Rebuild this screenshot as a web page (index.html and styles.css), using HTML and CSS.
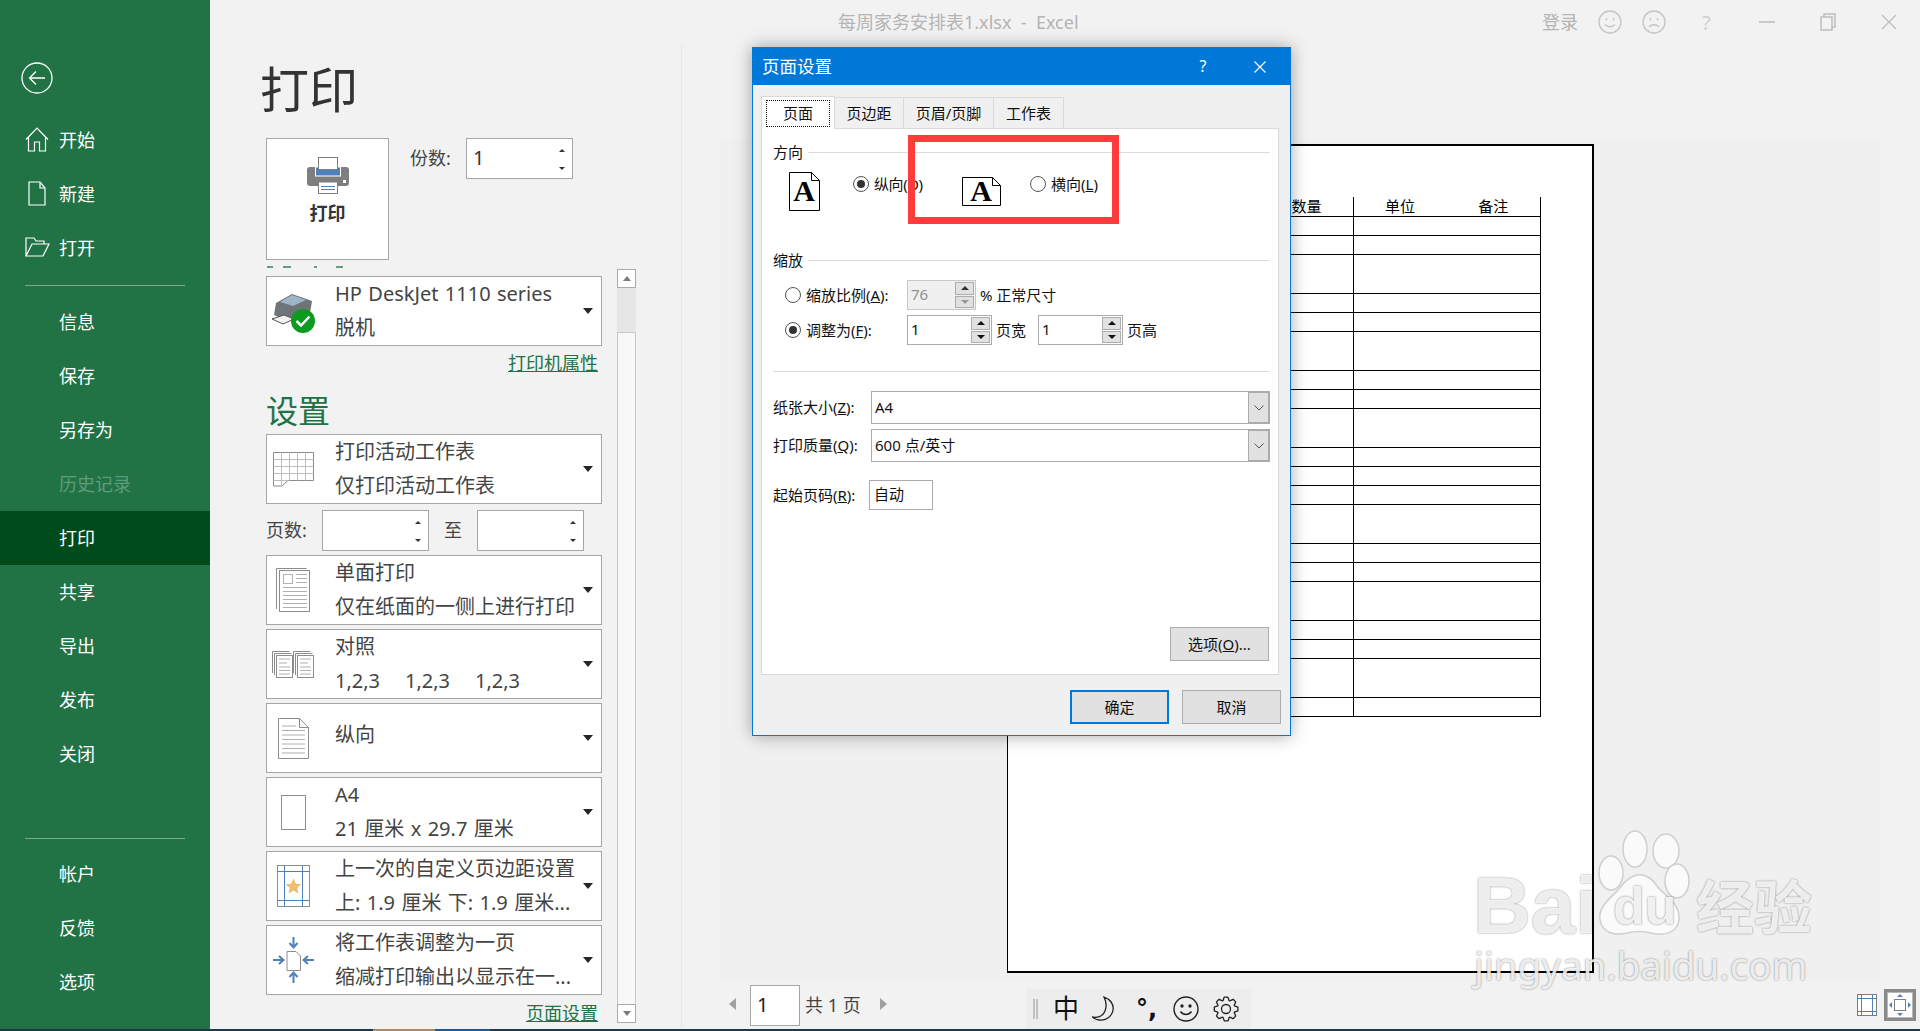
FILE: index.html
```html
<!DOCTYPE html>
<html lang="zh-CN">
<head>
    <meta charset="UTF-8">
    <title>每周家务安排表1.xlsx - Excel</title>
    <link rel="stylesheet" href="styles.css">
</head>
<body>
<div class="app">
    <!-- Green backstage menu -->
    <nav class="sidebar">
        <svg class="back" width="32" height="32" viewBox="0 0 32 32" fill="none" stroke="#fff" stroke-width="1.3"><circle cx="16" cy="16" r="15"/><path d="M24 16H8.5M15 9.5L8.5 16l6.5 6.5"/></svg>
        <a class="nav-item"><span class="nav-icon"><svg width="24" height="25" viewBox="0 0 24 25" fill="none" stroke="#fff" stroke-width="1.2"><path d="M1 12.5L12 1l11 11.5M3.5 10.5V24h6v-9h5v9h6V10.5"/></svg></span>开始</a>
        <a class="nav-item"><span class="nav-icon"><svg width="24" height="25" viewBox="0 0 24 25" fill="none" stroke="#fff" stroke-width="1.2"><path d="M4 1h11l5 6v17H4zM15 1v6h5"/></svg></span>新建</a>
        <a class="nav-item"><span class="nav-icon"><svg width="25" height="20" viewBox="0 0 25 20" fill="none" stroke="#fff" stroke-width="1.2"><path d="M1 19V1h8l2 3h8v3M1 19h17l6-12H7z"/></svg></span>打开</a>
        <div class="nav-line first-line"></div>
        <a class="nav-item"><span class="nav-icon"></span>信息</a>
        <a class="nav-item"><span class="nav-icon"></span>保存</a>
        <a class="nav-item"><span class="nav-icon"></span>另存为</a>
        <a class="nav-item disabled"><span class="nav-icon"></span>历史记录</a>
        <a class="nav-item active"><span class="nav-icon"></span>打印</a>
        <a class="nav-item"><span class="nav-icon"></span>共享</a>
        <a class="nav-item"><span class="nav-icon"></span>导出</a>
        <a class="nav-item"><span class="nav-icon"></span>发布</a>
        <a class="nav-item"><span class="nav-icon"></span>关闭</a>
        <div class="nav-line second-line"></div>
        <a class="nav-item"><span class="nav-icon"></span>帐户</a>
        <a class="nav-item"><span class="nav-icon"></span>反馈</a>
        <a class="nav-item"><span class="nav-icon"></span>选项</a>
    </nav>

    <main class="main">
        <header class="titlebar">
            <div class="doc-title">每周家务安排表1.xlsx&nbsp; -&nbsp; Excel</div>
            <div class="window-tools">
                <span class="login">登录</span>
                <svg class="tool smile" width="24" height="24" viewBox="0 0 24 24" fill="none" stroke="#c4c4c4" stroke-width="1.3"><circle cx="12" cy="12" r="11"/><path d="M7 14.5c2.5 3 7.5 3 10 0M8.5 8v2.5M15.5 8v2.5"/></svg>
                <svg class="tool frown" width="24" height="24" viewBox="0 0 24 24" fill="none" stroke="#c4c4c4" stroke-width="1.3"><circle cx="12" cy="12" r="11"/><path d="M7 17c2.5-3 7.5-3 10 0M8.5 8v2.5M15.5 8v2.5"/></svg>
                <span class="tool help">?</span>
                <svg class="tool minimize" width="16" height="2" viewBox="0 0 16 2"><path d="M0 1h16" stroke="#bdbdbd" stroke-width="1.5"/></svg>
                <svg class="tool restore" width="16" height="18" viewBox="0 0 16 18" fill="none" stroke="#bdbdbd" stroke-width="1.5"><path d="M1 4h11v13H1zM4 4V1h11v13h-3"/></svg>
                <svg class="tool close" width="16" height="16" viewBox="0 0 16 16" fill="none" stroke="#bdbdbd" stroke-width="1.3"><path d="M1 1l14 14M15 1L1 15"/></svg>
            </div>
        </header>

        <div class="content">
            <!-- Left: print settings -->
            <section class="print-panel">
                <div class="settings-col">
                    <h1 class="page-title">打印</h1>
                    <div class="print-row">
                        <button class="print-btn">
                            <svg width="42" height="37" viewBox="0 0 42 37"><rect y="10" width="42" height="19" rx="3" fill="#7f7f7f"/><rect x="8.5" y="10" width="25" height="9" fill="#4f81bd" stroke="#fff"/><rect x="11.5" y="0.5" width="19" height="12" fill="#fff" stroke="#7f7f7f"/><rect x="11.5" y="25" width="19" height="11.5" fill="#fff" stroke="#7f7f7f"/><path d="M14 29.5h14M14 32.5h14" stroke="#4f81bd"/><rect x="36" y="23" width="3" height="3" fill="#fff"/></svg>
                            <span class="print-label">打印</span>
                        </button>
                        <span class="field-label copies-label">份数:</span>
                        <div class="spin copies"><span class="spin-value">1</span><span class="carets"><i class="caret-up"></i><i class="caret-down"></i></span></div>
                    </div>
                    <!-- Top edge of the next heading, cut off by the scroll area -->
                    <div class="sliver"><i class="s1"></i><i class="s2"></i><i class="s3"></i><i class="s4"></i></div>
                    <div class="drop">
                        <span class="drop-icon"><svg width="44" height="44" viewBox="0 0 44 44"><path d="M5 14l16-9 20 7-2 12-22 8-14-6z" fill="#6f7478"/><path d="M9 13l12-7 14 5-13 6z" fill="#9fb4c4"/><path d="M1 30l12-4 10 4-11 5z" fill="#f2f2f2" stroke="#555"/><circle cx="32" cy="32" r="12" fill="#0d9a1f"/><path d="M25.5 32l4.5 4.5 8.5-9" fill="none" stroke="#fff" stroke-width="2.5"/></svg></span>
                        <div class="drop-text"><div>HP DeskJet 1110 series</div><div>脱机</div></div>
                        <i class="drop-arrow"></i>
                    </div>
                    <a class="link printer-link">打印机属性</a>
                    <h2 class="section-title">设置</h2>
                    <div class="drop">
                        <span class="drop-icon"><svg width="41" height="35" viewBox="0 0 41 35" fill="#fff" stroke="#8c8c8c"><path d="M.5.5h40v28H15l-6 5.5H.5z"/><path d="M.5 7.5h40M.5 14.5h40M.5 21.5h40M.5 28.5h15M8.5.5v33M16.5.5v28M24.5.5v28M32.5.5v28" fill="none" stroke="#bdbdbd"/></svg></span>
                        <div class="drop-text"><div>打印活动工作表</div><div>仅打印活动工作表</div></div>
                        <i class="drop-arrow"></i>
                    </div>
                    <div class="pages-row">
                        <span class="field-label pages-label">页数:</span>
                        <div class="spin pages"><span class="spin-value"></span><span class="carets"><i class="caret-up"></i><i class="caret-down"></i></span></div>
                        <span class="field-label to-label">至</span>
                        <div class="spin pages"><span class="spin-value"></span><span class="carets"><i class="caret-up"></i><i class="caret-down"></i></span></div>
                    </div>
                    <div class="drop">
                        <span class="drop-icon"><svg width="34" height="44" viewBox="0 0 34 44" fill="none" stroke="#8c8c8c"><path d="M.5 41V.5h30"/><rect x="3.5" y="2.5" width="30" height="41" fill="#fff"/><rect x="7.5" y="6.5" width="9" height="9" stroke="#b0b0b0"/><path d="M20 6.5h11M20 10.5h11M20 14.5h11M7 19.5h24M7 23.5h24M7 27.5h24M7 31.5h24M7 35.5h24M7 39.5h24" stroke="#b0b0b0"/></svg></span>
                        <div class="drop-text"><div>单面打印</div><div>仅在纸面的一侧上进行打印</div></div>
                        <i class="drop-arrow"></i>
                    </div>
                    <div class="drop">
                        <span class="drop-icon"><svg width="42" height="27" viewBox="0 0 42 27" fill="none" stroke="#8c8c8c"><path d="M.5 22V.5h17M2.5 24V2.5h17"/><rect x="4.5" y="4.5" width="16" height="22" fill="#fff"/><path d="M7 8h11M7 12h8M7 16h11M7 19.5h11M7 23h11" stroke="#b0b0b0"/><path d="M21.5 22V.5h17M23.5 24V2.5h17"/><rect x="25.5" y="4.5" width="16" height="22" fill="#fff"/><path d="M28 8h11M28 12h8M28 16h11M28 19.5h11M28 23h11" stroke="#b0b0b0"/></svg></span>
                        <div class="drop-text"><div>对照</div><div><span class="collate-item">1,2,3</span><span class="collate-item">1,2,3</span><span class="collate-item">1,2,3</span></div></div>
                        <i class="drop-arrow"></i>
                    </div>
                    <div class="drop">
                        <span class="drop-icon"><svg width="31" height="41" viewBox="0 0 31 41" fill="#fff" stroke="#8c8c8c"><path d="M.5.5h21l9 9v31H.5zM21.5.5v9h9"/><path d="M4 8h14M4 12.5h23M4 17h23M4 21.5h23M4 26h23M4 30.5h23M4 35h23" stroke="#b0b0b0"/></svg></span>
                        <div class="drop-text single"><div>纵向</div></div>
                        <i class="drop-arrow"></i>
                    </div>
                    <div class="drop">
                        <span class="drop-icon"><svg width="25" height="35" viewBox="0 0 25 35"><rect x=".5" y=".5" width="24" height="34" fill="#fff" stroke="#8c8c8c"/></svg></span>
                        <div class="drop-text"><div>A4</div><div>21 厘米 x 29.7 厘米</div></div>
                        <i class="drop-arrow"></i>
                    </div>
                    <div class="drop">
                        <span class="drop-icon"><svg width="33" height="42" viewBox="0 0 33 42" fill="none"><rect x=".5" y=".5" width="32" height="41" fill="#fff" stroke="#8c8c8c"/><path d="M7.5.5v41M25.5.5v41M.5 6.5h32M.5 35.5h32" stroke="#4f81bd"/><path d="M16.5 13.5l2.3 5.2 5.7.5-4.3 3.8 1.3 5.5-5-3-5 3 1.3-5.5-4.3-3.8 5.7-.5z" fill="#ecbd73"/></svg></span>
                        <div class="drop-text"><div>上一次的自定义页边距设置</div><div>上: 1.9 厘米 下: 1.9 厘米...</div></div>
                        <i class="drop-arrow"></i>
                    </div>
                    <div class="drop">
                        <span class="drop-icon"><svg width="41" height="46" viewBox="0 0 41 46" fill="none"><path d="M14 14.5h9l4.5 4.5v14.5H14z" fill="#fff" stroke="#8c8c8c"/><path d="M20.5 0v10M16.5 6l4 4.5 4-4.5M20.5 46V36M16.5 40l4-4.5 4 4.5M0 23h10M6 19l4.5 4-4.5 4M41 23H31M35 19l-4.5 4 4.5 4" stroke="#4f81bd" stroke-width="2"/></svg></span>
                        <div class="drop-text"><div>将工作表调整为一页</div><div>缩减打印输出以显示在一...</div></div>
                        <i class="drop-arrow"></i>
                    </div>
                    <a class="link setup-link">页面设置</a>
                </div>
                <div class="scrollbar">
                    <div class="scroll-btn"><i class="scroll-up"></i></div>
                    <div class="scroll-thumb"></div>
                    <div class="scroll-track"></div>
                    <div class="scroll-btn"><i class="scroll-down"></i></div>
                </div>
            </section>

            <!-- Right: preview -->
            <section class="preview-panel">
                <div class="preview">
                    <div class="paper">
                        <table class="sheet">
                            <tr class="head"><td></td><td>数量</td><td class="mid">单位</td><td>备注</td></tr>
                            <tr><td></td><td></td><td class="mid"></td><td></td></tr>
                            <tr><td></td><td></td><td class="mid"></td><td></td></tr>
                            <tr class="tall"><td></td><td></td><td class="mid"></td><td></td></tr>
                            <tr><td></td><td></td><td class="mid"></td><td></td></tr>
                            <tr><td></td><td></td><td class="mid"></td><td></td></tr>
                            <tr class="tall"><td></td><td></td><td class="mid"></td><td></td></tr>
                            <tr><td></td><td></td><td class="mid"></td><td></td></tr>
                            <tr><td></td><td></td><td class="mid"></td><td></td></tr>
                            <tr class="tall"><td></td><td></td><td class="mid"></td><td></td></tr>
                            <tr><td></td><td></td><td class="mid"></td><td></td></tr>
                            <tr><td></td><td></td><td class="mid"></td><td></td></tr>
                            <tr><td></td><td></td><td class="mid"></td><td></td></tr>
                            <tr class="tall"><td></td><td></td><td class="mid"></td><td></td></tr>
                            <tr><td></td><td></td><td class="mid"></td><td></td></tr>
                            <tr><td></td><td></td><td class="mid"></td><td></td></tr>
                            <tr class="tall"><td></td><td></td><td class="mid"></td><td></td></tr>
                            <tr><td></td><td></td><td class="mid"></td><td></td></tr>
                            <tr><td></td><td></td><td class="mid"></td><td></td></tr>
                            <tr class="tall"><td></td><td></td><td class="mid"></td><td></td></tr>
                            <tr><td></td><td></td><td class="mid"></td><td></td></tr>
                        </table>
                    </div>
                </div>
                <div class="pager">
                    <i class="page-prev"></i>
                    <div class="page-input">1</div>
                    <span class="page-total">共 1 页</span>
                    <i class="page-next"></i>
                    <div class="ime">
                        <span class="ime-grip"></span>
                        <span class="ime-zh">中</span>
                        <svg class="ime-moon" width="24" height="26" viewBox="0 0 24 26" fill="none" stroke="#222" stroke-width="1.3"><path d="M13 1c6 2 10 7 9 13-1 7-8 11-14 10-3 0-5-2-7-3 6 1 11-1 13-6 2-5 1-10-1-14z"/></svg>
                        <span class="ime-punct">°,</span>
                        <svg class="ime-smile" width="26" height="26" viewBox="0 0 26 26" fill="none" stroke="#222" stroke-width="1.4"><circle cx="13" cy="13" r="12"/><path d="M7.5 15.5c3 4 8 4 11 0"/><circle cx="9" cy="10" r="1" fill="#222"/><circle cx="17" cy="10" r="1" fill="#222"/></svg>
                        <svg class="ime-gear" width="26" height="26" viewBox="0 0 26 26" fill="none" stroke="#222" stroke-width="1.3" stroke-linejoin="round"><path d="M11.1 1.2h3.8l1.2 3.3.7.3 3.3-1.5 2.6 2.6-1.5 3.3.3.7 3.4 1.2v3.8l-3.4 1.2-.3.7 1.5 3.3-2.6 2.6-3.3-1.5-.7.3-1 3.4h-3.8l-1.2-3.4-.7-.3-3.3 1.5-2.6-2.6 1.5-3.3-.3-.7-3.4-1.2v-3.8l3.4-1.2.3-.7-1.5-3.3 2.6-2.6 3.3 1.5.7-.3z"/><circle cx="13" cy="13" r="4.5"/></svg>
                    </div>
                    <div class="view-btns">
                        <svg width="20" height="22" viewBox="0 0 20 22" fill="#fff"><rect x=".5" y=".5" width="19" height="21" stroke="#7f7f7f"/><path d="M4.5 0v22M15.5 0v22M0 4.5h20M0 17.5h20" stroke="#4f81bd" fill="none"/></svg>
                        <div class="fit-btn">
                            <svg width="24" height="24" viewBox="0 0 24 24"><rect width="24" height="24" fill="#fff"/><rect x="6.5" y="6.5" width="11" height="11" fill="#fff" stroke="#7f7f7f"/><path d="M12 1l3 3H9zM12 23l3-3H9zM1 12l3-3v6zM23 12l-3-3v6z" fill="#4f81bd"/></svg>
                        </div>
                    </div>
                </div>
            </section>
        </div>
    </main>
</div>
<div class="taskline"><span class="task-a"></span><span class="task-b"></span></div>

<!-- Page setup dialog, floats over the backstage -->
<div class="dialog">
    <div class="dialog-title">
        <span class="dialog-name">页面设置</span>
        <span class="dialog-help">?</span>
        <svg class="dialog-close" width="60" height="12" viewBox="0 0 60 12" fill="none" stroke="#fff" stroke-width="1.1"><path d="M24.5 .5l11 11M35.5 .5l-11 11"/></svg>
    </div>
    <div class="tabs">
        <div class="tab active"><span class="tab-focus">页面</span></div>
        <div class="tab margins">页边距</div>
        <div class="tab headers">页眉/页脚</div>
        <div class="tab sheets">工作表</div>
    </div>
    <div class="tab-panel">
        <div class="group-row first-group"><span>方向</span><i class="group-line"></i></div>
        <div class="orient">
            <svg class="orient-portrait" width="31" height="39" viewBox="0 0 31 39"><path d="M.5.5h22l8 8v30H.5zM22.5.5v8h8" fill="#fff" stroke="#000"/><text x="15" y="29" class="icon-letter">A</text></svg>
            <span class="radio checked portrait-radio"></span>
            <span class="radio-text portrait-text">纵向(O)</span>
            <svg class="orient-landscape" width="39" height="29" viewBox="0 0 39 29"><path d="M.5.5h30l8 8v20H.5zM30.5.5v8h8" fill="#fff" stroke="#000"/><text x="19" y="24" class="icon-letter">A</text></svg>
            <span class="radio landscape-radio"></span>
            <span class="radio-text">横向(<u>L</u>)</span>
        </div>
        <div class="group-row scale-group"><span>缩放</span><i class="group-line"></i></div>
        <div class="scale-row row-one">
            <span class="radio"></span>
            <label class="scale-label">缩放比例(<u>A</u>):</label>
            <div class="num disabled short"><span>76</span><div class="num-btns"><b class="up"></b><b class="down"></b></div></div>
            <span class="after-num">% 正常尺寸</span>
        </div>
        <div class="scale-row row-two">
            <span class="radio checked"></span>
            <label class="scale-label">调整为(<u>F</u>):</label>
            <div class="num"><span>1</span><div class="num-btns"><b class="up"></b><b class="down"></b></div></div>
            <span class="after-num">页宽</span>
            <div class="num second-num"><span>1</span><div class="num-btns"><b class="up"></b><b class="down"></b></div></div>
            <span class="after-num">页高</span>
        </div>
        <div class="separator"></div>
        <div class="select-row paper-row">
            <label class="select-label">纸张大小(<u>Z</u>):</label>
            <div class="select"><span>A4</span><i class="select-btn"><svg width="10" height="6" viewBox="0 0 10 6" fill="none" stroke="#555"><path d="M.5.5L5 5 9.5.5"/></svg></i></div>
        </div>
        <div class="select-row quality-row">
            <label class="select-label">打印质量(<u>Q</u>):</label>
            <div class="select"><span>600 点/英寸</span><i class="select-btn"><svg width="10" height="6" viewBox="0 0 10 6" fill="none" stroke="#555"><path d="M.5.5L5 5 9.5.5"/></svg></i></div>
        </div>
        <div class="first-page-row">
            <label class="first-page-label">起始页码(<u>R</u>):</label>
            <div class="first-page-input">自动</div>
        </div>
        <button class="dlg-btn options-btn">选项(<u>O</u>)...</button>
    </div>
    <div class="dialog-footer">
        <button class="dlg-btn primary">确定</button>
        <button class="dlg-btn">取消</button>
    </div>
</div>

<!-- Red marker drawn on the screenshot -->
<div class="red-box"></div>

<!-- Baidu watermark -->
<div class="watermark">
    <span class="wm-bai">Bai</span>
    <svg class="wm-paw" width="92" height="108" viewBox="0 0 92 108" fill="#fafafa" stroke="#cfcfcf" stroke-width="1.5">
        <ellipse cx="13" cy="43" rx="12" ry="17"/>
        <ellipse cx="37" cy="19" rx="12" ry="18"/>
        <ellipse cx="68" cy="21" rx="13" ry="17"/>
        <ellipse cx="79" cy="51" rx="12" ry="17"/>
        <path d="M36 46c9-4 18 2 23 10 7 9 24 18 22 34-2 14-17 16-28 13-8-2-16-2-24 0-12 3-25 0-27-13-2-14 11-22 18-30 5-6 9-12 16-14z"/>
    </svg>
    <span class="wm-du">du</span>
    <span class="wm-jy">经验</span>
    <span class="wm-url">jingyan.baidu.com</span>
</div>
</body>
</html>
```

FILE: styles.css
```css
* {
    box-sizing: border-box;
}

html, body {
    margin: 0;
    padding: 0;
}

body {
    position: relative;
    width: 1920px;
    height: 1031px;
    overflow: hidden;
    background-color: #f2f2f2;
    color: #444;
    font-family: "Noto Sans", "Noto Sans CJK SC", sans-serif;
}

svg {
    display: block;
}

i {
    display: block;
}

.app {
    display: flex;
    height: 1029px;
}

/* Bottom edge of the desktop behind the window */
.taskline {
    display: flex;
    height: 2px;
    background-color: #1c3a4a;
}

.task-a {
    width: 62px;
    margin-left: 373px;
    background-color: #a98a68;
}

.task-b {
    width: 55px;
    background-color: #1b5a96;
}

/* Sidebar */
.sidebar {
    width: 210px;
    flex-shrink: 0;
    padding-top: 62px;
    background-color: #217346;
    color: #fff;
    font-size: 18px;
}

.back {
    margin: 0 0 19px 21px;
}

.nav-item {
    display: flex;
    align-items: center;
    height: 54px;
    padding-left: 25px;
    padding-bottom: 2px;
}

.nav-item.active {
    background-color: #004b1c;
}

.nav-item.disabled {
    color: #5f9c7b;
}

.nav-icon {
    width: 34px;
}

.nav-line {
    height: 1px;
    margin-left: 25px;
    width: 160px;
    background-color: #7aab90;
}

.first-line {
    margin-top: 10px;
    margin-bottom: 9px;
}

.second-line {
    margin-top: 57px;
    margin-bottom: 8px;
}

/* Title bar */
.main {
    flex: 1;
    display: flex;
    flex-direction: column;
    min-width: 0;
}

.titlebar {
    display: flex;
    align-items: center;
    height: 44px;
    padding-left: 628px;
    color: #b4b4b4;
}

.doc-title {
    font-size: 18px;
    padding-bottom: 2px;
}

.window-tools {
    display: flex;
    align-items: center;
    margin-left: auto;
    padding-right: 23px;
}

.login {
    font-size: 18px;
    padding-bottom: 2px;
}

.smile {
    margin-left: 20px;
}

.frown {
    margin-left: 20px;
}

.help {
    margin-left: 36px;
    width: 12px;
    font-size: 20px;
    color: #cfcfcf;
}

.minimize {
    margin-left: 45px;
}

.restore {
    margin-left: 45px;
}

.close {
    margin-left: 45px;
}

.content {
    flex: 1;
    display: flex;
    min-height: 0;
}

/* Print settings column */
.print-panel {
    display: flex;
    width: 472px;
    flex-shrink: 0;
    padding-left: 56px;
    border-right: 1px solid #e8e8e8;
}

.settings-col {
    width: 336px;
    flex-shrink: 0;
}

.page-title {
    height: 60px;
    margin: 15px 0 19px -6px;
    color: #333;
    font-size: 49px;
    font-weight: 400;
    line-height: 60px;
}

.print-row {
    display: flex;
    align-items: flex-start;
}

.print-btn {
    display: flex;
    flex-direction: column;
    align-items: center;
    width: 123px;
    height: 122px;
    padding: 18px 0 0;
    background-color: #fff;
    border: 1px solid #a6a6a6;
    font-family: inherit;
}

.print-label {
    margin-top: 6px;
    color: #333;
    font-size: 18px;
    font-weight: 700;
    line-height: 26px;
}

.field-label {
    font-size: 18px;
    line-height: 41px;
    color: #444;
}

.copies-label {
    margin-left: 21px;
    width: 56px;
}

.spin {
    display: flex;
    justify-content: space-between;
    height: 41px;
    padding: 0 7px 0 6px;
    background-color: #fff;
    border: 1px solid #a6a6a6;
}

.spin-value {
    font-size: 20px;
    line-height: 38px;
    color: #333;
}

.copies {
    width: 107px;
}

.pages {
    width: 107px;
}

.carets {
    display: flex;
    flex-direction: column;
    justify-content: space-between;
    padding: 10px 0 8px;
}

.caret-up {
    width: 0;
    border: 3px solid transparent;
    border-top: 0;
    border-bottom: 3px solid #333;
}

.caret-down {
    width: 0;
    border: 3px solid transparent;
    border-bottom: 0;
    border-top: 3px solid #333;
}

.sliver {
    display: flex;
    height: 2px;
    margin-top: 6px;
    margin-bottom: 8px;
}

.sliver i {
    height: 2px;
    background-color: #5f9f7d;
}

.s1 {
    width: 6px;
    margin-left: 1px;
}

.s2 {
    width: 8px;
    margin-left: 10px;
}

.s3 {
    width: 3px;
    margin-left: 23px;
}

.s4 {
    width: 7px;
    margin-left: 19px;
}

.drop {
    display: flex;
    align-items: center;
    width: 336px;
    height: 70px;
    margin-bottom: 4px;
    background-color: #fff;
    border: 1px solid #a6a6a6;
}

.drop-icon {
    display: flex;
    justify-content: center;
    width: 68px;
    padding-right: 16px;
    flex-shrink: 0;
}

.drop-text {
    flex: 1;
    min-width: 0;
    padding-bottom: 1px;
    color: #444;
    font-size: 20px;
    line-height: 34px;
    white-space: nowrap;
    word-spacing: 1.2px;
}

.drop-text.single {
    padding-bottom: 6px;
}

.collate-item {
    display: inline-block;
    width: 70px;
}

.drop-arrow {
    width: 0;
    margin-right: 8px;
    border-left: 5.5px solid transparent;
    border-right: 5.5px solid transparent;
    border-top: 6px solid #262626;
}

.link {
    display: block;
    width: 336px;
    padding-right: 4px;
    color: #217346;
    font-size: 18px;
    line-height: 24px;
    text-decoration: underline;
    text-align: right;
}

.printer-link {
    margin-top: 5px;
}

.setup-link {
    margin-top: 6px;
}

.section-title {
    height: 36px;
    margin: 18px 0 5px;
    color: #217346;
    font-size: 32px;
    font-weight: 400;
    line-height: 36px;
}

.pages-row {
    display: flex;
    margin-top: 6px;
    margin-bottom: 4px;
}

.pages-label {
    width: 56px;
}

.to-label {
    width: 48px;
    text-align: center;
}

/* Scrollbar */
.scrollbar {
    display: flex;
    flex-direction: column;
    width: 19px;
    height: 754px;
    margin-top: 225px;
    margin-left: 15px;
}

.scroll-btn {
    display: flex;
    align-items: center;
    justify-content: center;
    height: 19px;
    background-color: #fff;
    border: 1px solid #ababab;
}

.scroll-up {
    width: 0;
    border: 4.5px solid transparent;
    border-top: 0;
    border-bottom: 5px solid #7a7a7a;
}

.scroll-down {
    width: 0;
    border: 4.5px solid transparent;
    border-bottom: 0;
    border-top: 5px solid #7a7a7a;
}

.scroll-thumb {
    height: 44px;
    background-color: #e6e6e6;
}

.scroll-track {
    flex: 1;
    background-color: #f8f8f8;
    border-left: 1px solid #c8c8c8;
    border-right: 1px solid #c8c8c8;
    border-top: 1px solid #c8c8c8;
}

/* Preview column */
.preview-panel {
    flex: 1;
    display: flex;
    flex-direction: column;
    min-width: 0;
}

.preview {
    width: 1160px;
    height: 840px;
    margin-top: 94px;
    margin-left: 38px;
    padding: 6px 0 0 287px;
    background-color: #f0f0f0;
}

.paper {
    width: 587px;
    height: 829px;
    padding: 51px 0 0 52px;
    background-color: #fff;
    border-top: 2px solid #000;
    border-left: 1px solid #000;
    border-right: 2px solid #000;
    border-bottom: 2px solid #000;
}

.sheet {
    width: 481px;
    border-collapse: collapse;
    table-layout: fixed;
    color: #000;
    font-size: 15px;
    text-align: center;
}

.sheet td {
    height: 19px;
    padding: 0;
    border-right: 1px solid #000;
    border-bottom: 1px solid #000;
    line-height: 19px;
}

.sheet td:nth-child(1) {
    width: 200px;
}

.sheet td:nth-child(2) {
    width: 93px;
}

.sheet td.mid {
    border-right: 0;
}

.sheet .tall td {
    height: 39px;
}

.sheet .head td {
    height: 19.5px;
}

.pager {
    flex: 1;
    display: flex;
    align-items: flex-start;
    padding: 7px 4px 0 47px;
}

.page-prev {
    width: 0;
    margin-top: 13px;
    border-top: 6px solid transparent;
    border-bottom: 6px solid transparent;
    border-right: 7px solid #a0a0a0;
}

.page-input {
    width: 50px;
    height: 41px;
    margin-left: 14px;
    padding-left: 6px;
    background-color: #fff;
    border: 1px solid #a6a6a6;
    color: #222;
    font-size: 20px;
    line-height: 38px;
}

.page-total {
    margin-left: 5px;
    width: 70px;
    font-size: 18px;
    line-height: 40px;
    color: #444;
}

.page-next {
    width: 0;
    margin-top: 13px;
    margin-left: 5px;
    border-top: 6px solid transparent;
    border-bottom: 6px solid transparent;
    border-left: 7px solid #a0a0a0;
}

.ime {
    display: flex;
    align-items: center;
    width: 225px;
    height: 40px;
    margin-top: 4px;
    margin-left: 139px;
    background-color: #ededed;
    color: #111;
}

.ime-grip {
    width: 5px;
    height: 20px;
    margin-left: 7px;
    border-left: 2px solid #c0c0c0;
    border-right: 2px solid #c0c0c0;
}

.ime-zh {
    margin-left: 15px;
    font-size: 26px;
    font-weight: 400;
    padding-bottom: 4px;
}

.ime-moon {
    margin-left: 12px;
}

.ime-punct {
    width: 24px;
    margin-left: 21px;
    font-family: "DejaVu Sans", sans-serif;
    font-size: 24px;
    font-weight: 700;
    line-height: 26px;
}

.ime-smile {
    margin-left: 13px;
}

.ime-gear {
    margin-left: 14px;
}

.view-btns {
    display: flex;
    align-items: center;
    gap: 7px;
    margin-left: auto;
    margin-top: 4px;
}

.fit-btn {
    padding: 1px;
    background-color: #b8b8b8;
    border: 3px solid #8a8a8a;
}

/* Page setup dialog */
.dialog {
    position: absolute;
    left: 752px;
    top: 47px;
    width: 539px;
    height: 689px;
    background-color: #f0f0f0;
    border: 1px solid #0078d7;
    box-shadow: 0 0 16px rgba(0, 0, 0, 0.35);
    color: #111;
    font-size: 15px;
}

.dialog-title {
    display: flex;
    align-items: center;
    height: 37px;
    padding-left: 9px;
    background-color: #0078d7;
    color: #fff;
}

.dialog-name {
    font-size: 17.5px;
    padding-bottom: 2px;
}

.dialog-help {
    margin-left: auto;
    width: 54px;
    text-align: center;
    font-size: 16px;
    padding-bottom: 2px;
}

.tabs {
    display: flex;
    align-items: flex-end;
    height: 33px;
    margin: 10px 0 0 8px;
}

.tab {
    display: flex;
    align-items: center;
    justify-content: center;
    height: 31px;
    padding-bottom: 2px;
    background-color: #f0f0f0;
    border: 1px solid #d9d9d9;
    border-bottom: 0;
    border-left: 0;
}

.tab.active {
    position: relative;
    z-index: 1;
    width: 74px;
    height: 33px;
    margin-bottom: -1px;
    padding: 3px 4px 2px;
    background-color: #fff;
    border-left: 1px solid #d9d9d9;
}

.tab-focus {
    display: flex;
    align-items: center;
    justify-content: center;
    width: 100%;
    height: 100%;
    padding-bottom: 2px;
    border: 1px dotted #111;
}

.margins {
    width: 69px;
}

.headers {
    width: 90px;
}

.sheets {
    width: 70px;
}

.tab-panel {
    display: flex;
    flex-direction: column;
    width: 518px;
    height: 547px;
    margin-left: 8px;
    padding: 0 8px 0 11px;
    background-color: #fff;
    border: 1px solid #d9d9d9;
}

.group-row {
    display: flex;
    align-items: center;
    gap: 5px;
    height: 20px;
    line-height: 20px;
    flex-shrink: 0;
}

.group-line {
    flex: 1;
    height: 1px;
    background-color: #dcdcdc;
}

.first-group {
    margin-top: 13px;
}

.scale-group {
    margin-top: 39px;
}

.orient {
    display: flex;
    align-items: flex-start;
    height: 49px;
    padding-top: 10px;
    padding-left: 16px;
    flex-shrink: 0;
}

.orient svg {
    overflow: visible;
}

.radio {
    position: relative;
    width: 16px;
    height: 16px;
    flex-shrink: 0;
    background-color: #fff;
    border: 1px solid #555;
    border-radius: 50%;
}

.radio.checked::after {
    content: "";
    position: absolute;
    left: 3px;
    top: 3px;
    width: 8px;
    height: 8px;
    background-color: #333;
    border-radius: 50%;
}

.portrait-radio {
    margin-top: 4px;
    margin-left: 33px;
}

.landscape-radio {
    margin-top: 4px;
    margin-left: 29px;
}

.radio-text {
    margin-left: 5px;
    margin-top: 2px;
    width: 58px;
    line-height: 20px;
    white-space: nowrap;
}

.portrait-text {
    letter-spacing: -0.4px;
}

.orient-landscape {
    margin-top: 5px;
    margin-left: 30px;
}

.icon-letter {
    font-family: "Liberation Serif", serif;
    font-size: 30px;
    font-weight: 700;
    text-anchor: middle;
}

.scale-row {
    display: flex;
    align-items: center;
    height: 30px;
    padding-left: 12px;
    flex-shrink: 0;
}

.row-one {
    margin-top: 10px;
}

.row-two {
    margin-top: 5px;
}

.scale-label {
    width: 106px;
    padding-left: 5px;
    padding-bottom: 2px;
    white-space: nowrap;
}

.num {
    display: flex;
    align-items: center;
    justify-content: space-between;
    width: 85px;
    height: 30px;
    padding-left: 3px;
    background-color: #fff;
    border: 1px solid #ababab;
}

.num span {
    padding-bottom: 2px;
}

.num.short {
    width: 69px;
}

.num.disabled {
    color: #8f8f8f;
    background-color: #f0f0f0;
    border-color: #c8c8c8;
}

.num-btns {
    display: flex;
    flex-direction: column;
    gap: 1px;
    width: 19px;
    height: 26px;
    margin-right: 1px;
}

.num-btns b {
    display: flex;
    flex: 1;
    align-items: center;
    justify-content: center;
    background-color: #e1e1e1;
    border: 1px solid #adadad;
}

.num-btns .up::after {
    content: "";
    border: 4px solid transparent;
    border-top: 0;
    border-bottom: 4px solid #111;
}

.num-btns .down::after {
    content: "";
    border: 4px solid transparent;
    border-bottom: 0;
    border-top: 4px solid #111;
}

.num.disabled .up::after {
    border-bottom-color: #333;
}

.num.disabled .down::after {
    border-top-color: #9a9a9a;
}

.after-num {
    margin-left: 4px;
    padding-bottom: 2px;
    white-space: nowrap;
}

.second-num {
    margin-left: 12px;
}

.separator {
    height: 1px;
    margin-top: 26px;
    background-color: #dcdcdc;
    flex-shrink: 0;
}

.select-row {
    display: flex;
    align-items: center;
    height: 33px;
    flex-shrink: 0;
}

.paper-row {
    margin-top: 19px;
}

.quality-row {
    margin-top: 5px;
}

.select-label {
    width: 98px;
    padding-bottom: 2px;
    white-space: nowrap;
}

.select {
    flex: 1;
    display: flex;
    align-items: center;
    justify-content: space-between;
    height: 33px;
    padding-left: 3px;
    background-color: #fff;
    border: 1px solid #ababab;
}

.select span {
    padding-bottom: 2px;
}

.select-btn {
    display: flex;
    align-items: center;
    justify-content: center;
    width: 21px;
    height: 31px;
    background-color: #e1e1e1;
    border: 1px solid #ababab;
}

.first-page-row {
    display: flex;
    align-items: center;
    height: 30px;
    margin-top: 18px;
    flex-shrink: 0;
}

.first-page-label {
    width: 96px;
    padding-bottom: 2px;
    white-space: nowrap;
}

.first-page-input {
    width: 64px;
    height: 30px;
    padding-left: 4px;
    background-color: #fff;
    border: 1px solid #ababab;
    line-height: 26px;
}

.dlg-btn {
    width: 99px;
    height: 34px;
    padding: 0 0 2px;
    background-color: #e1e1e1;
    border: 1px solid #adadad;
    color: #111;
    font-family: inherit;
    font-size: 15px;
}

.dlg-btn.primary {
    border: 2px solid #0078d7;
}

.options-btn {
    align-self: flex-end;
    margin-top: 117px;
    margin-right: 1px;
    flex-shrink: 0;
}

.dialog-footer {
    display: flex;
    justify-content: flex-end;
    gap: 13px;
    margin-top: 15px;
    padding-right: 9px;
}

/* Red marker */
.red-box {
    position: absolute;
    left: 908px;
    top: 135px;
    width: 211px;
    height: 89px;
    border: 7px solid #ff3b3b;
}

/* Watermark */
.watermark {
    position: absolute;
    left: 0;
    top: 0;
    width: 1920px;
    height: 1031px;
    pointer-events: none;
    font-family: "Liberation Sans", sans-serif;
}

.wm-bai,
.wm-du,
.wm-jy,
.wm-url {
    position: absolute;
    color: rgba(250, 250, 250, 0.9);
    text-shadow: 0 0 2px rgba(0, 0, 0, 0.5);
    white-space: nowrap;
}

.wm-bai {
    left: 1473px;
    top: 864px;
    font-size: 80px;
    font-weight: 700;
    line-height: 84px;
}

.wm-paw {
    position: absolute;
    left: 1598px;
    top: 830px;
}

.wm-du {
    left: 1613px;
    top: 880px;
    color: #f0f0f0;
    font-size: 52px;
    font-weight: 700;
    line-height: 52px;
}

.wm-jy {
    left: 1696px;
    top: 866px;
    font-family: "Noto Sans CJK SC", sans-serif;
    font-size: 58px;
    font-weight: 700;
    line-height: 76px;
}

.wm-url {
    left: 1474px;
    top: 937px;
    font-family: "Noto Sans", sans-serif;
    font-size: 38.5px;
    line-height: 56px;
}
```
